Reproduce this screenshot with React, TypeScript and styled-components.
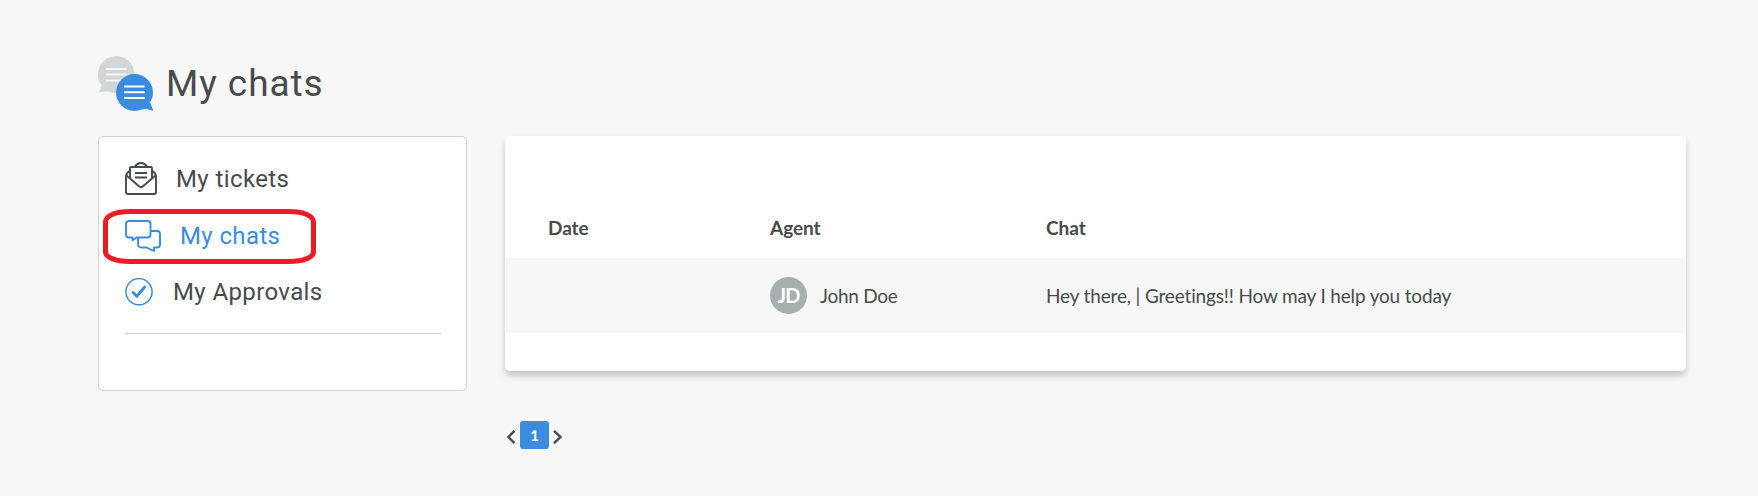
import React from "react";
import styled, { createGlobalStyle } from "styled-components";

const GlobalStyle = createGlobalStyle`
  * { box-sizing: border-box; }
  body { margin: 0; background: #f7f7f7; color: #474b4c; font-family: Lato, sans-serif; }
  svg { display: block; flex: none; }
`;

const Page = styled.main`
  width: 1758px;
  height: 496px;
  padding: 56px 72px 0 98px;
  background: #f7f7f7;
`;

const Header = styled.header`
  display: flex;
  height: 80px;
  gap: 12px;
`;

const Title = styled.h1`
  margin: 7px 0 0;
  font: 400 37px/42px Roboto, sans-serif;
  letter-spacing: 0.95px;
`;

const Columns = styled.div`
  display: flex;
  align-items: flex-start;
  gap: 38px;
`;

const Sidebar = styled.nav`
  width: 369px;
  height: 255px;
  padding: 14px 25px 0 26px;
  background: #fff;
  border: 1px solid #d0d2d2;
  border-radius: 5px;
`;

const MenuItem = styled.a<{ $active?: boolean; $gap: number; $spacing: number }>`
  position: relative;
  display: flex;
  align-items: center;
  height: 56.5px;
  gap: ${(p) => p.$gap}px;
  color: ${(p) => (p.$active ? "#3a8dde" : "#474b4c")};
  font: 400 24px/32px Roboto, sans-serif;
  letter-spacing: ${(p) => p.$spacing}px;
  white-space: nowrap;
`;

const Highlight = styled.svg`
  position: absolute;
  left: -22px;
  top: 1px;
`;

const Divider = styled.hr`
  height: 1px;
  margin: 12px 0 0;
  border: 0;
  background: #d0d2d2;
`;

const Main = styled.section`
  width: 1181px;
`;

const Card = styled.div`
  height: 235px;
  padding-top: 62px;
  background: #fff;
  border-radius: 0 0 5px 5px;
  box-shadow: 0 5px 6px rgba(0, 0, 0, 0.2);
`;

const Row = styled.div<{ $head?: boolean }>`
  display: grid;
  grid-template-columns: 222px 276px 1fr;
  align-items: center;
  height: ${(p) => (p.$head ? 60 : 75)}px;
  padding: ${(p) => (p.$head ? "0 0 2px 43px" : "0 0 0 43px")};
  font-size: 19px;
  font-weight: ${(p) => (p.$head ? 700 : 400)};
  letter-spacing: ${(p) => (p.$head ? "-0.05px" : "-0.16px")};
  background: ${(p) => (p.$head ? "#fff" : "#f7f7f7")};
`;

const Agent = styled.div`
  display: flex;
  align-items: center;
  gap: 13px;
  letter-spacing: -0.28px;
`;

const Avatar = styled.span`
  display: grid;
  place-items: center;
  width: 37px;
  height: 37px;
  padding-bottom: 1px;
  border-radius: 50%;
  background: #a8b0af;
  color: #fff;
  font-size: 20px;
  font-weight: 700;
  letter-spacing: -0.8px;
`;

const Pagination = styled.div`
  display: flex;
  align-items: center;
  margin-top: 50px;
  padding-left: 2px;
  gap: 4px;
`;

const PageNumber = styled.span`
  width: 29px;
  height: 28px;
  border-radius: 3px;
  background: #3a8dde;
  color: #fff;
  font-size: 15px;
  font-weight: 700;
  line-height: 29px;
  text-align: center;
`;

const Arrow = styled.svg`
  margin-top: 3px;
`;

const HeaderIcon = () => (
  <svg width="56" height="56" viewBox="0 0 56 56" fill="none">
    <path d="M18.5 0A18.5 18.5 0 1 1 13 36.3Q7 34.5 1 36.5L3.5 29.4A18.5 18.5 0 0 1 18.5 0Z" fill="#d2d6d6" />
    <path d="M9 13H28M9 18.5H28M9 24.5H28" stroke="#f7f7f7" strokeWidth="2" strokeLinecap="round" />
    <circle cx="36.5" cy="36.5" r="18.5" fill="#3a8dde" />
    <path d="M44 53Q49 51.5 54.6 54.3L51.5 46Z" fill="#3a8dde" stroke="#3a8dde" strokeWidth="1" strokeLinejoin="round" />
    <path d="M27 30.5H46M27 36.3H46M27 42H46" stroke="#fff" strokeWidth="2" strokeLinecap="round" />
  </svg>
);

const TicketIcon = () => (
  <svg width="32" height="34" viewBox="0 0 32 34" fill="none" stroke="#474b4c" strokeWidth="1.9" strokeLinejoin="round">
    <path d="M5 8.5L2.4 11Q1 12.4 1 14.3V30Q1 32 3 32H29Q31 32 31 30V14.3Q31 12.4 29.6 11L27 8.5" />
    <path d="M1.5 13.5L14 24.2Q16 26.3 18 24.2L30.5 13.5M5 16.5V6Q5 5 6 5H26Q27 5 27 6V16.5" />
    <path d="M9.8 4.7Q12.5 1 16 1T22.2 4.7" />
    <path d="M10 11H22M10 15.5H22" strokeWidth="1.9" />
  </svg>
);

const ChatIcon = () => (
  <svg width="36" height="34" viewBox="0 0 36 34" fill="none" stroke="#3a8dde" strokeWidth="1.9" strokeLinejoin="round">
    <path d="M12.5 18L7.5 21.3V18.5H4Q1 18.5 1 15.5V5Q1 2 4 2H22.5Q25.5 2 25.5 5V15.5Q25.5 18.5 22.5 18.5H12" />
    <path d="M25.8 12H32Q35 12 35 15V25.5Q35 28.5 32 28.5H29V32L21.5 28.5H16.5Q13 28.5 13 25V18.5" />
  </svg>
);

const ApprovalIcon = () => (
  <svg width="28" height="28" viewBox="0 0 28 28" fill="none" stroke="#3a8dde">
    <circle cx="14" cy="13.7" r="13.1" strokeWidth="1.5" />
    <path d="M8 14.5L12 18.2L19.6 9" strokeWidth="2.8" strokeLinecap="round" />
  </svg>
);

const Chevron = ({ right = false }: { right?: boolean }) => (
  <Arrow width="9" height="14" viewBox="0 0 9 14" fill="none" stroke="#474b4c" strokeWidth="2.4">
    <path d={right ? "M1 .8L7.5 7L1 13.2" : "M7.5 .8L1.4 7L7.5 13.2"} />
  </Arrow>
);

export default function App() {
  return (
    <Page>
      <GlobalStyle />
      <Header>
        <HeaderIcon />
        <Title>My chats</Title>
      </Header>
      <Columns>
        <Sidebar>
          <MenuItem $gap={19} $spacing={0.4}><TicketIcon />My tickets</MenuItem>
          <MenuItem $active $gap={19} $spacing={0.38}>
            <Highlight width="213" height="55" viewBox="0 0 213 55" fill="none">
              <path d="M2.5 13C2.5 7 12 2.5 27 2.5H186C201 2.5 210.5 7 210.5 13V43C210.5 48 201 52.5 186 52.5H27C12 52.5 2.5 48 2.5 43Z" stroke="#ed1c24" strokeWidth="5" />
            </Highlight>
            <ChatIcon />My chats
          </MenuItem>
          <MenuItem $gap={20} $spacing={0.38}><ApprovalIcon />My Approvals</MenuItem>
          <Divider />
        </Sidebar>
        <Main>
          <Card>
            <Row $head><span>Date</span><span>Agent</span><span>Chat</span></Row>
            <Row>
              <span />
              <Agent><Avatar>JD</Avatar>John Doe</Agent>
              <span>Hey there, | Greetings!! How may I help you today</span>
            </Row>
          </Card>
          <Pagination><Chevron /><PageNumber>1</PageNumber><Chevron right /></Pagination>
        </Main>
      </Columns>
    </Page>
  );
}
